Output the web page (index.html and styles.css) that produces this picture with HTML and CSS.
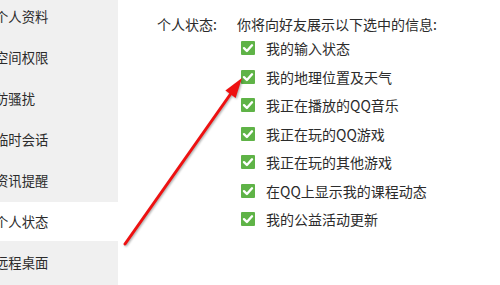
FILE: index.html
```html
<!DOCTYPE html>
<html lang="zh-CN">
<head>
<meta charset="utf-8">
<link rel="stylesheet" href="styles.css">
</head>
<body>
<div class="page">
  <nav class="sidebar">
    <div class="nav-item">个人资料</div>
    <div class="nav-item">空间权限</div>
    <div class="nav-item">防骚扰</div>
    <div class="nav-item">临时会话</div>
    <div class="nav-item">资讯提醒</div>
    <div class="nav-item active">个人状态</div>
    <div class="nav-item">远程桌面</div>
  </nav>
  <main class="content">
    <div class="label">个人状态:</div>
    <div class="options">
      <div class="heading">你将向好友展示以下选中的信息:</div>
      <ul class="list">
        <li class="row"><span class="check"><svg viewBox="0 0 14 14"><path d="M3 7.2 L5.9 10 L11 4.3" /></svg></span>我的输入状态</li>
        <li class="row"><span class="check"><svg viewBox="0 0 14 14"><path d="M3 7.2 L5.9 10 L11 4.3" /></svg></span>我的地理位置及天气</li>
        <li class="row"><span class="check"><svg viewBox="0 0 14 14"><path d="M3 7.2 L5.9 10 L11 4.3" /></svg></span>我正在播放的QQ音乐</li>
        <li class="row"><span class="check"><svg viewBox="0 0 14 14"><path d="M3 7.2 L5.9 10 L11 4.3" /></svg></span>我正在玩的QQ游戏</li>
        <li class="row"><span class="check"><svg viewBox="0 0 14 14"><path d="M3 7.2 L5.9 10 L11 4.3" /></svg></span>我正在玩的其他游戏</li>
        <li class="row"><span class="check"><svg viewBox="0 0 14 14"><path d="M3 7.2 L5.9 10 L11 4.3" /></svg></span>在QQ上显示我的课程动态</li>
        <li class="row"><span class="check"><svg viewBox="0 0 14 14"><path d="M3 7.2 L5.9 10 L11 4.3" /></svg></span>我的公益活动更新</li>
      </ul>
    </div>
  </main>
  <svg class="arrow" width="500" height="285" viewBox="0 0 500 285">
    <line x1="125" y1="244" x2="232" y2="92" />
    <polygon points="242,78 225.4,90.6 235.6,98" />
  </svg>
</div>
</body>
</html>
```

FILE: styles.css
```css
html, body {
  margin: 0;
  padding: 0;
  background: #ffffff;
}
body {
  font-family: "Noto Sans CJK SC", "Noto Sans", sans-serif;
  font-size: 13.33px;
  color: #2b2b2b;
}
.page {
  position: relative;
  width: 500px;
  height: 285px;
  overflow: hidden;
  display: flex;
}
.sidebar {
  width: 118px;
  flex: none;
  background: #f0f0f0;
  margin-top: -3px;
  height: 290px;
}
.nav-item {
  height: 39px;
  line-height: 39px;
  margin-bottom: 2px;
  text-indent: -5px;
  white-space: nowrap;
  overflow: hidden;
}
.nav-item.active {
  background: #ffffff;
}
.content {
  flex: 1;
  display: flex;
  padding-left: 39px;
  padding-top: 14px;
  font-size: 14px;
}
.label {
  width: 80px;
  line-height: 20px;
}
.options {
  display: flex;
  flex-direction: column;
}
.heading {
  line-height: 20px;
}
.list {
  list-style: none;
  margin: 0;
  padding: 0;
}
.row {
  height: 28.5px;
  display: flex;
  align-items: center;
}
.check {
  width: 14px;
  height: 14px;
  margin-left: 4px;
  margin-right: 11px;
  background: #5fb347;
  border-radius: 1px;
  display: flex;
}
.check svg {
  width: 14px;
  height: 14px;
}
.check path {
  fill: none;
  stroke: #ffffff;
  stroke-width: 2.4;
  stroke-linecap: round;
  stroke-linejoin: round;
}
.arrow {
  position: absolute;
  left: 0;
  top: 0;
  pointer-events: none;
  filter: drop-shadow(1px 1px 1px rgba(0, 0, 0, 0.35));
}
.arrow line {
  stroke: #ee1111;
  stroke-width: 3;
  stroke-linecap: round;
}
.arrow polygon {
  fill: #ee1111;
}
```
